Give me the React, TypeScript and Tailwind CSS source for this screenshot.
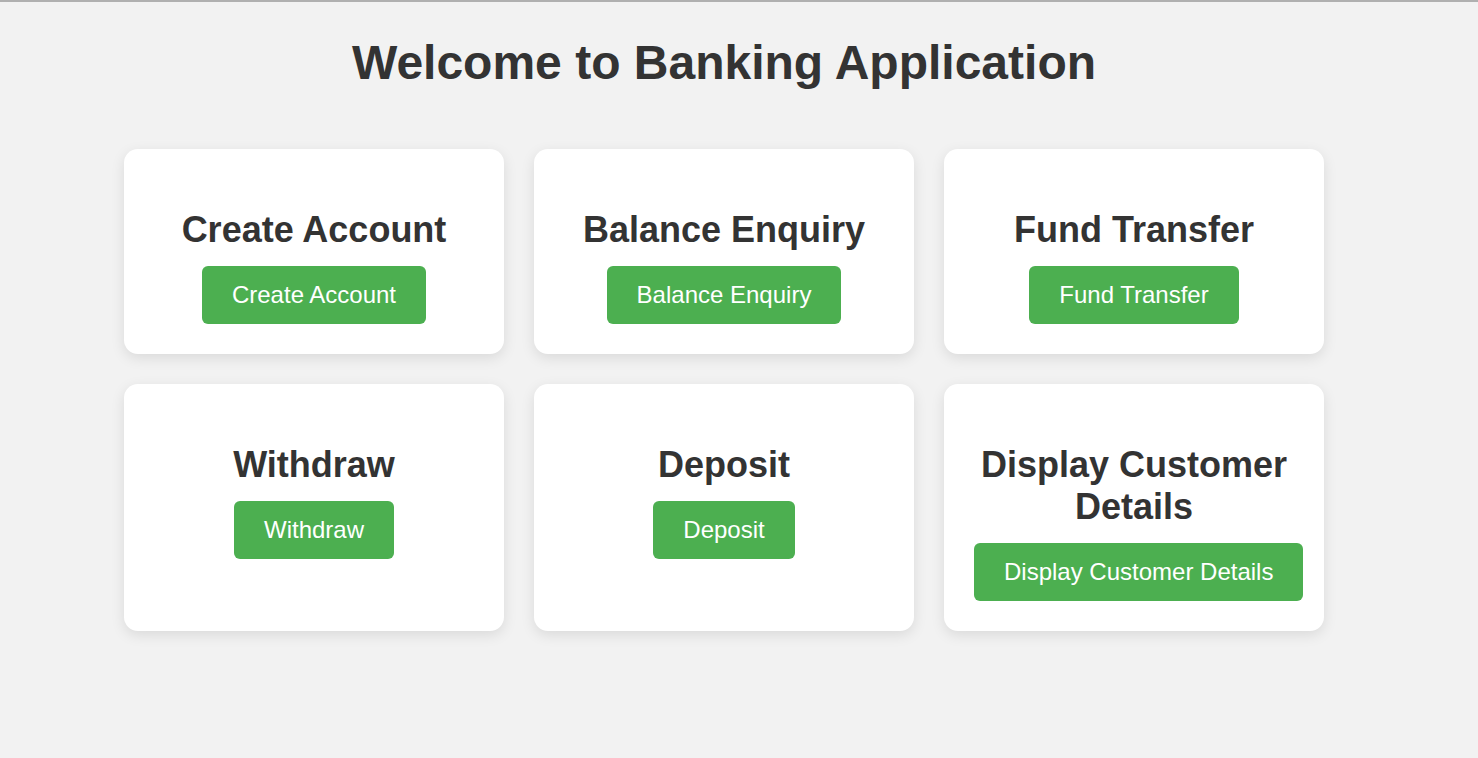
import React from "react"

const actions = [
  "Create Account",
  "Balance Enquiry",
  "Fund Transfer",
  "Withdraw",
  "Deposit",
  "Display Customer Details",
]

export default function App() {
  return (
    // Page entière, fond gris clair
    <div
      className="min-h-[758px] bg-[#f2f2f2] border-t-2 border-[#b0b0b0] text-[#333333]"
      style={{ fontFamily: '"Liberation Sans", Arial, sans-serif' }}
    >
      <div className="w-[1448px] flex flex-col items-center">
        <h1 className="mt-[33px] text-[48px] leading-[55px] font-bold">
          Welcome to Banking Application
        </h1>

        {/* Grille des actions */}
        <div className="mt-[59px] grid grid-cols-[380px_380px_380px] gap-[30px]">
          {actions.map((label) => (
            <ActionCard key={label} label={label} />
          ))}
        </div>
      </div>
    </div>
  )
}

const ActionCard = ({ label }: { label: string }) => (
  <div className="bg-white rounded-[14px] shadow-[0_4px_14px_rgba(0,0,0,0.1)] p-[30px] flex flex-col [align-items:safe_center] text-center">
    <h2 className="mt-[30px] mb-[15px] text-[36px] leading-[42px] font-bold">{label}</h2>
    <button className="bg-[#4caf50] text-white text-[24px] leading-[28px] px-[30px] py-[15px] rounded-[6px] whitespace-nowrap">
      {label}
    </button>
  </div>
)
